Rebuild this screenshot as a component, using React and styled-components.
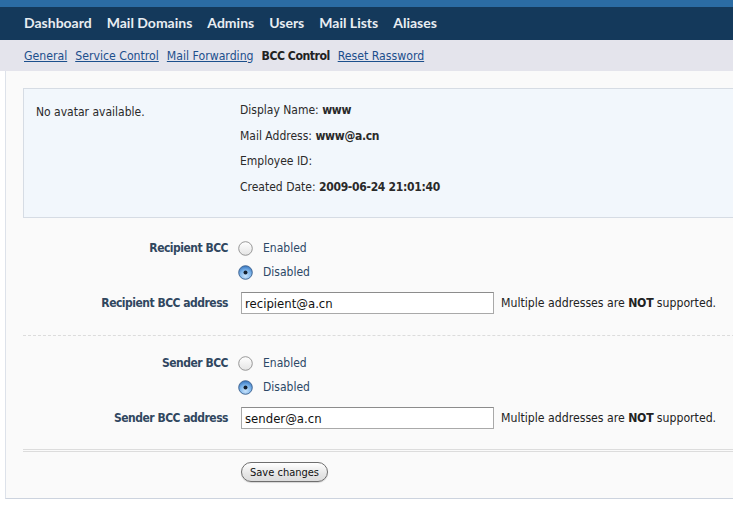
import React from "react"
import styled, { createGlobalStyle } from "styled-components"

const GlobalStyle = createGlobalStyle`
  html, body {
    margin: 0;
    padding: 0;
    background: #fff;
    overflow: hidden;
  }
  body {
    font-family: "DejaVu Sans Condensed", "DejaVu Sans", sans-serif;
    font-size: 12px;
    color: #222;
  }
`

const Page = styled.div`
  width: 760px;
`

const TopStrip = styled.div`
  height: 7px;
  background: #2b6ca4;
`

const MainNav = styled.nav`
  height: 33px;
  background: #14395b;
  display: flex;
  align-items: center;
  gap: 15px;
  padding: 0 0 2px 24px;
  box-sizing: border-box;
`

const NavItem = styled.a`
  font-family: Lato, "DejaVu Sans", sans-serif;
  font-weight: 700;
  font-size: 14px;
  color: #e8edf2;
  text-decoration: none;
`

const SubNav = styled.nav`
  height: 31px;
  background: #e4e4ec;
  display: flex;
  align-items: center;
  gap: 8px;
  padding-left: 24px;
`

const SubLink = styled.a`
  font-size: 12.2px;
  color: ${p => (p.$active ? "#222" : "#1c4f8c")};
  font-weight: ${p => (p.$active ? 700 : 400)};
  letter-spacing: ${p => (p.$active ? "-0.5px" : "0")};
  text-decoration: ${p => (p.$active ? "none" : "underline")};
`

const Panel = styled.div`
  margin-left: 5px;
  background: #fafafa;
  border-left: 1px solid #dde2ea;
  border-bottom: 1px solid #ccd3de;
  padding: 17px 0 16px 17px;
`

const InfoBox = styled.div`
  display: flex;
  background: #f2f7fc;
  border: 1px solid #d6dce4;
  padding: 9px 0 17px 12px;
  margin-bottom: 3px;
`

const AvatarCol = styled.div`
  width: 204px;
  padding-top: 3px;
  line-height: 22px;
  color: #2a2a2a;
`

const InfoList = styled.div`
  display: flex;
  flex-direction: column;
`

const InfoLine = styled.div`
  height: 25.5px;
  line-height: 25.5px;
  color: #2a2a2a;

  b {
    font-weight: 700;
    letter-spacing: -0.3px;
  }
`

const Group = styled.div`
  padding: 15px 0 ${p => (p.$double ? "19px" : "20px")};
  border-bottom: ${p => (p.$double ? "3px double #dcdcdc" : "1px dashed #dcdcdc")};
`

const Row = styled.div`
  display: flex;
  align-items: center;
  min-height: 24px;
  margin-top: ${p => (p.$gap ? "7px" : "0")};
`

const Label = styled.div`
  width: 205px;
  text-align: right;
  padding-right: 10px;
  font-weight: 700;
  letter-spacing: -0.5px;
  color: #30475f;
`

const RadioWrap = styled.label`
  display: flex;
  align-items: center;
  gap: 10px;
  color: #2c4866;
`

const TextInput = styled.input`
  box-sizing: border-box;
  width: 253px;
  height: 22px;
  margin-left: 3px;
  padding: 0 3px;
  border: 1px solid #a9a9a9;
  border-top-color: #8c8c8c;
  background: #fff;
  font-family: "DejaVu Sans Condensed", "DejaVu Sans", sans-serif;
  font-size: 13px;
  color: #111;
`

const Note = styled.span`
  margin-left: 7px;
  font-size: 12.2px;
  color: #222;

  b {
    font-weight: 700;
    letter-spacing: -0.3px;
  }
`

const Actions = styled.div`
  padding: 10px 0 0 218px;
`

const SaveButton = styled.button`
  height: 20px;
  padding: 0 8px;
  border: 1px solid #6e6e6e;
  border-radius: 10px;
  background: linear-gradient(#ffffff, #e6e6e6 60%, #dcdcdc);
  font-family: "DejaVu Sans Condensed", "DejaVu Sans", sans-serif;
  font-size: 11px;
  color: #111;
  box-shadow: 0 1px 1px rgba(0, 0, 0, 0.15);
`

const Radio = ({ checked }) => (
  <svg width="15" height="15" viewBox="0 0 15 15">
    <defs>
      <linearGradient id="rOff" x1="0" y1="0" x2="0" y2="1">
        <stop offset="0" stopColor="#ffffff" />
        <stop offset="1" stopColor="#e4e4e4" />
      </linearGradient>
      <radialGradient id="rOn" cx="0.5" cy="0.75" r="0.7">
        <stop offset="0" stopColor="#c9e3fb" />
        <stop offset="0.6" stopColor="#7cb4ea" />
        <stop offset="1" stopColor="#3e7cc4" />
      </radialGradient>
    </defs>
    {checked ? (
      <>
        <circle cx="7.5" cy="7.5" r="6.8" fill="url(#rOn)" stroke="#3a5f8c" strokeWidth="0.9" />
        <circle cx="7.5" cy="7.5" r="2" fill="#15202e" />
      </>
    ) : (
      <circle cx="7.5" cy="7.5" r="6.8" fill="url(#rOff)" stroke="#8d8d8d" strokeWidth="0.9" />
    )}
  </svg>
)

const BccGroup = ({ title, address, double }) => (
  <Group $double={double}>
    <Row>
      <Label>{title}</Label>
      <RadioWrap>
        <Radio />
        Enabled
      </RadioWrap>
    </Row>
    <Row>
      <Label />
      <RadioWrap>
        <Radio checked />
        Disabled
      </RadioWrap>
    </Row>
    <Row $gap>
      <Label>{title} address</Label>
      <TextInput defaultValue={address} />
      <Note>
        Multiple addresses are <b>NOT</b> supported.
      </Note>
    </Row>
  </Group>
)

export default function App() {
  return (
    <Page>
      <GlobalStyle />
      <TopStrip />
      <MainNav>
        {["Dashboard", "Mail Domains", "Admins", "Users", "Mail Lists", "Aliases"].map(n => (
          <NavItem key={n}>{n}</NavItem>
        ))}
      </MainNav>
      <SubNav>
        <SubLink href="#">General</SubLink>
        <SubLink href="#">Service Control</SubLink>
        <SubLink href="#">Mail Forwarding</SubLink>
        <SubLink $active>BCC Control</SubLink>
        <SubLink href="#">Reset Rassword</SubLink>
      </SubNav>
      <Panel>
        <InfoBox>
          <AvatarCol>No avatar available.</AvatarCol>
          <InfoList>
            <InfoLine>
              Display Name: <b>www</b>
            </InfoLine>
            <InfoLine>
              Mail Address: <b>www@a.cn</b>
            </InfoLine>
            <InfoLine>Employee ID:</InfoLine>
            <InfoLine>
              Created Date: <b>2009-06-24 21:01:40</b>
            </InfoLine>
          </InfoList>
        </InfoBox>
        <BccGroup title="Recipient BCC" address="recipient@a.cn" />
        <BccGroup title="Sender BCC" address="sender@a.cn" double />
        <Actions>
          <SaveButton>Save changes</SaveButton>
        </Actions>
      </Panel>
    </Page>
  )
}
